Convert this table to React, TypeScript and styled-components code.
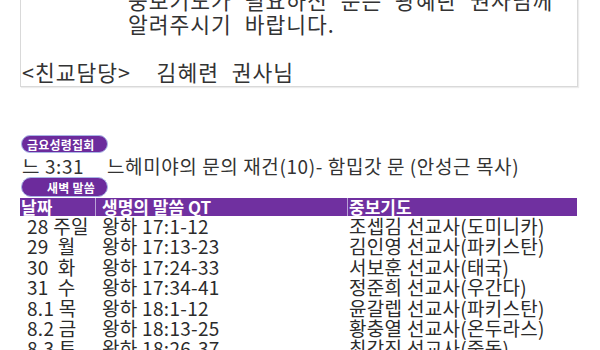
import { createGlobalStyle, styled } from "styled-components"

const GlobalStyle = createGlobalStyle`
  html, body {
    margin: 0;
    padding: 0;
    background: #ffffff;
  }
  body {
    width: 600px;
    height: 350px;
    overflow: hidden;
    font-family: "Noto Sans CJK KR", "Noto Sans", sans-serif;
    color: #2b2b2b;
  }
`

type Reading = {
  day: string
  text: string
  prayer: string
}

const readings: Reading[] = [
  { day: "28 주일", text: "왕하 17:1-12", prayer: "조셉김 선교사(도미니카)" },
  { day: "29\u00a0\u00a0월", text: "왕하 17:13-23", prayer: "김인영 선교사(파키스탄)" },
  { day: "30\u00a0\u00a0화", text: "왕하 17:24-33", prayer: "서보훈 선교사(태국)" },
  { day: "31\u00a0\u00a0수", text: "왕하 17:34-41", prayer: "정준희 선교사(우간다)" },
  { day: "8.1 목", text: "왕하 18:1-12", prayer: "윤갈렙 선교사(파키스탄)" },
  { day: "8.2 금", text: "왕하 18:13-25", prayer: "황충열 선교사(온두라스)" },
  { day: "8.3 토", text: "왕하 18:26-37", prayer: "최강진 선교사(중동)" },
]

export default function App() {
  return (
    <Page>
      <GlobalStyle />
      <NoticeBox>
        <IndentedLine>중보기도가 필요하신 분은 광혜란 권사님께</IndentedLine>
        <IndentedLine>알려주시기 바랍니다.</IndentedLine>
        <NoticeLine>&nbsp;</NoticeLine>
        <NoticeLine>&lt;친교담당&gt;&nbsp; 김혜련 권사님</NoticeLine>
      </NoticeBox>

      <Section>
        <Pill $height={18} $indent={5}>금요성령집회</Pill>
        <SermonLine>
          <SermonRef>느 3:31</SermonRef>
          <span>느헤미야의 문의 재건(10)- 함밉갓 문 (안성근 목사)</span>
        </SermonLine>
        <Pill $height={20} $indent={25}>새벽 말씀</Pill>

        <Table>
          <HeadCell $pad={1}>날짜</HeadCell>
          <HeadCell $pad={6}>생명의 말씀 QT</HeadCell>
          <HeadCell $pad={1} $last>중보기도</HeadCell>
          {readings.map((r) => (
            <Row key={r.day}>
              <Cell $pad={7}>{r.day}</Cell>
              <Cell $pad={6}>{r.text}</Cell>
              <Cell $pad={1}>{r.prayer}</Cell>
            </Row>
          ))}
        </Table>
      </Section>
    </Page>
  )
}

const Page = styled.div`
  display: flex;
  flex-direction: column;
  padding: 0 22px 0 20px;
`

const NoticeBox = styled.div`
  margin-top: -14px;
  padding: 1px 0 2px 1px;
  border: 1px solid #d9d9d9;
  box-shadow: 1px 1px 1px #ececec;
  font-size: 21.5px;
  letter-spacing: 1px;
  word-spacing: 7px;
  line-height: 24px;
  color: #333333;
`

const NoticeLine = styled.div`
  white-space: pre;
`

const IndentedLine = styled(NoticeLine)`
  padding-left: 106px;
`

const Section = styled.div`
  display: flex;
  flex-direction: column;
  align-items: flex-start;
  margin-top: 48px;
  padding-left: 1px;
`

const Pill = styled.div<{ $height: number; $indent: number }>`
  box-sizing: border-box;
  width: 87px;
  height: ${(p) => p.$height}px;
  padding-left: ${(p) => p.$indent}px;
  display: flex;
  align-items: center;
  background: #6c2b9c;
  border: 1.5px solid #a9b6e6;
  border-radius: 10px;
  color: #ffffff;
  font-size: 12px;
  font-weight: 700;
  letter-spacing: 0.2px;
  white-space: pre;
`

const SermonLine = styled.div`
  display: flex;
  height: 24px;
  align-items: center;
  margin-left: 1px;
  font-size: 19px;
  letter-spacing: 0.6px;
  color: #333333;
`

const SermonRef = styled.span`
  width: 85px;
`

const Table = styled.div`
  display: grid;
  grid-template-columns: 76px 252px 229px;
  width: 557px;
  margin-top: 1px;
  margin-left: -1px;
`

const HeadCell = styled.div<{ $pad: number; $last?: boolean }>`
  height: 18px;
  line-height: 18px;
  padding-left: ${(p) => p.$pad}px;
  background: #7030a0;
  border-right: ${(p) => (p.$last ? "none" : "1px solid #b9a2d6")};
  color: #ffffff;
  font-size: 17px;
  font-weight: 700;
  white-space: pre;
`

const Row = styled.div`
  display: contents;
`

const Cell = styled.div<{ $pad: number }>`
  height: 20.4px;
  line-height: 20.4px;
  padding-left: ${(p) => p.$pad}px;
  font-size: 19px;
  letter-spacing: 0.3px;
  color: #2b2b2b;
  white-space: pre;
`
